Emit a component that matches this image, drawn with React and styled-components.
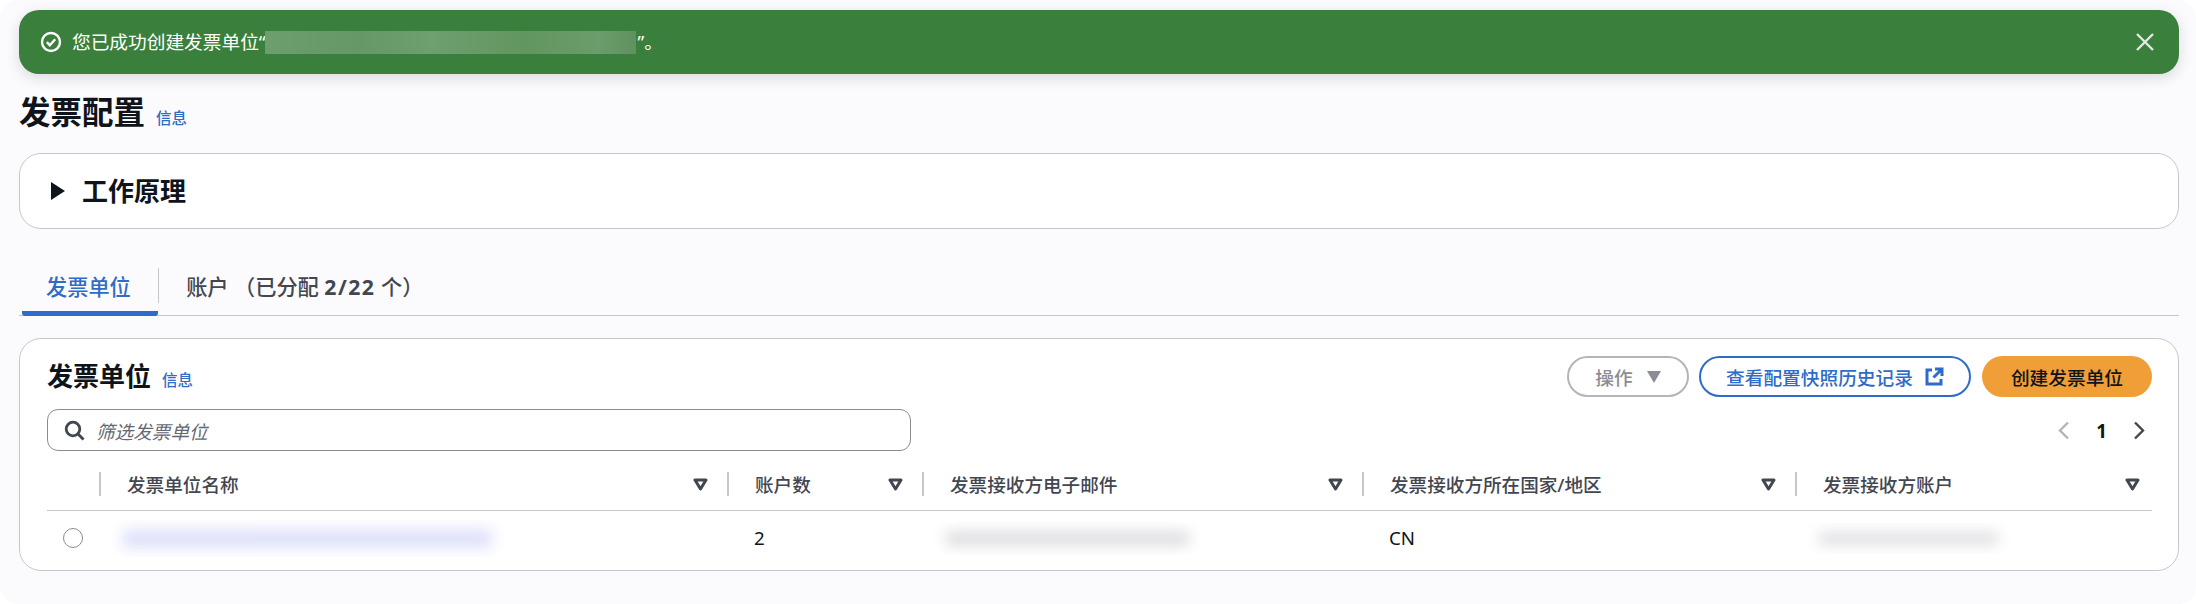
import React from 'react'
import styled, { createGlobalStyle } from 'styled-components'

const GlobalStyle = createGlobalStyle`
    html,body{
        margin:0;
        padding:0;
        background:#fff;
    }
    body{
        font-family:"Noto Sans","Noto Sans CJK SC",sans-serif;
        color:#0f141a;
    }
`

const columns = [
    { title: '发票单位名称' },
    { title: '账户数' },
    { title: '发票接收方电子邮件' },
    { title: '发票接收方所在国家/地区' },
    { title: '发票接收方账户', last: true },
]

function CheckCircleIcon() {
    return (
        <svg width="22" height="22" viewBox="0 0 22 22" fill="none" stroke="#fff" strokeWidth="2.4">
            <circle cx="11" cy="11" r="9" />
            <path d="M6.8 11.2l3 3 5.4-6" />
        </svg>
    )
}

function CloseIcon() {
    return (
        <svg width="20" height="20" viewBox="0 0 20 20" stroke="#e4e9e4" strokeWidth="2.4" fill="none">
            <path d="M2 2l16 16M18 2L2 18" />
        </svg>
    )
}

function SortIcon() {
    return (
        <svg width="15" height="13" viewBox="0 0 15 13" fill="none" stroke="#424650" strokeWidth="3" strokeLinejoin="round">
            <path d="M2 2h11L7.5 11z" />
        </svg>
    )
}

function SearchIcon() {
    return (
        <svg width="21" height="21" viewBox="0 0 21 21" fill="none" stroke="#424650" strokeWidth="2.8">
            <circle cx="9" cy="9" r="6.8" />
            <path d="M14 14l5.5 5.5" />
        </svg>
    )
}

function ExternalIcon() {
    return (
        <svg width="19" height="19" viewBox="0 0 19 19" fill="none" stroke="#2f6bc8" strokeWidth="3">
            <path d="M7 3H2v14h14v-5" />
            <path d="M10 2h7v7M17 2L8.5 10.5" />
        </svg>
    )
}

function Chevron({ left, muted }) {
    return (
        <svg width="13" height="19" viewBox="0 0 13 19" fill="none" stroke={muted ? '#b4b4bb' : '#424650'} strokeWidth="2.4">
            <path d={left ? 'M11 1.5L3 9.5l8 8' : 'M2 1.5l8 8-8 8'} />
        </svg>
    )
}

export default function App() {
    return (
        <Page>
            <GlobalStyle />
            <Flash>
                <CheckCircleIcon />
                <FlashMessage>您已成功创建发票单位“</FlashMessage>
                <FlashRedaction />
                <FlashText>”。</FlashText>
                <FlashClose><CloseIcon /></FlashClose>
            </Flash>

            <PageHeader>
                <PageTitle>发票配置</PageTitle>
                <InfoLink>信息</InfoLink>
            </PageHeader>

            <Expandable>
                <Caret />
                <ExpandableTitle>工作原理</ExpandableTitle>
            </Expandable>

            <Tabs>
                <Tab active>发票单位</Tab>
                <TabDivider />
                <Tab>账户 （已分配 <b>2/22</b> 个）</Tab>
            </Tabs>

            <Card>
                <CardTop>
                    <CardTitleRow>
                        <CardTitle>发票单位</CardTitle>
                        <InfoLink>信息</InfoLink>
                    </CardTitleRow>
                    <Actions>
                        <DisabledButton>操作<ButtonCaret /></DisabledButton>
                        <OutlineButton>查看配置快照历史记录<ExternalIcon /></OutlineButton>
                        <PrimaryButton>创建发票单位</PrimaryButton>
                    </Actions>
                </CardTop>

                <FilterRow>
                    <SearchBox>
                        <SearchIcon />
                        <Placeholder>筛选发票单位</Placeholder>
                    </SearchBox>
                    <Pagination>
                        <Chevron left muted />
                        <PageNumber>1</PageNumber>
                        <Chevron />
                    </Pagination>
                </FilterRow>

                <Table>
                    <HeaderSpacer />
                    {columns.map(col => (
                        <HeaderCell key={col.title} $last={col.last}>
                            <HeaderDivider />
                            <HeaderLabel>{col.title}</HeaderLabel>
                            <SortIcon />
                        </HeaderCell>
                    ))}
                    <RadioCell><Radio /></RadioCell>
                    <Cell>
                        <Redaction $width={397} $height={37} $tint="#d9dcfa" />
                    </Cell>
                    <TextCell>2</TextCell>
                    <Cell>
                        <Redaction $width={271} $height={33} $tint="#d8d8dc" />
                    </Cell>
                    <TextCell>CN</TextCell>
                    <Cell>
                        <Redaction $width={207} $height={31} $tint="#dadade" />
                    </Cell>
                </Table>
            </Card>
        </Page>
    )
}

const Page = styled.div`
    box-sizing:border-box;
    width:2196px;
    height:604px;
    padding:10px 17px 0 19px;
    background:#fbfbfe;
    border-radius:18px;
    overflow:hidden;
`

const Flash = styled.div`
    box-sizing:border-box;
    height:64px;
    display:flex;
    align-items:center;
    padding:0 24px 0 21px;
    background:#3a7f3b;
    border-radius:20px;
    color:#fff;
    box-shadow:0 4px 14px rgba(15,20,26,.14);
    svg{
        flex:none;
    }
`

const FlashText = styled.span`
    font-size:18.7px;
    line-height:24px;
`

const FlashMessage = styled(FlashText)`
    margin-left:10px;
`

const FlashRedaction = styled.div`
    width:371px;
    height:23px;
    margin:0 2px 0 -1px;
    background:linear-gradient(90deg,#6c9e6e 0%,#659866 25%,#6d9f6f 45%,#62965f 70%,#6b9c6c 90%,#5f925f 100%);
`

const FlashClose = styled.div`
    margin-left:auto;
    display:flex;
`

const PageHeader = styled.div`
    display:flex;
    align-items:baseline;
    gap:11px;
    margin-top:16px;
`

const PageTitle = styled.h1`
    margin:0;
    font-size:31.5px;
    line-height:44px;
    font-weight:700;
    color:#0f141a;
`

const InfoLink = styled.a`
    font-size:15.5px;
    font-weight:500;
    color:#2f6bc8;
`

const Expandable = styled.div`
    box-sizing:border-box;
    height:76px;
    margin-top:19px;
    display:flex;
    align-items:center;
    padding-left:31px;
    background:#fff;
    border:1.4px solid #c6c6cd;
    border-radius:22px;
`

const Caret = styled.span`
    width:0;
    height:0;
    border-style:solid;
    border-width:9px 0 9px 14px;
    border-color:transparent transparent transparent #0f141a;
`

const ExpandableTitle = styled.h2`
    margin:0 0 0 17px;
    font-size:26px;
    line-height:36px;
    font-weight:700;
`

const Tabs = styled.div`
    box-sizing:border-box;
    height:87px;
    margin-top:0;
    padding:39px 0 0 3px;
    display:flex;
    align-items:flex-start;
    border-bottom:1.4px solid #c6c6cd;
`

const Tab = styled.div`
    box-sizing:border-box;
    height:48px;
    padding:${props => props.active ? '5px 27px 0 24px' : '5px 0 0 27px'};
    font-size:21.2px;
    line-height:28px;
    font-weight:500;
    color:${props => props.active ? '#2f6bc8' : '#424650'};
    border-bottom:${props => props.active ? '5px solid #2f6bc8' : 'none'};
    border-radius:3px;
    white-space:pre;
    b{
        font-weight:700;
        letter-spacing:1.5px;
    }
`

const TabDivider = styled.div`
    width:1.4px;
    height:35px;
    background:#c6c6cd;
`

const Card = styled.section`
    box-sizing:border-box;
    height:233px;
    margin-top:22px;
    padding:17px 26px 0 27px;
    background:#fff;
    border:1.4px solid #c6c6cd;
    border-radius:22px;
`

const CardTop = styled.div`
    display:flex;
    justify-content:space-between;
    align-items:flex-start;
    height:53px;
`

const CardTitleRow = styled.div`
    display:flex;
    align-items:baseline;
    gap:11px;
    margin-top:2px;
`

const CardTitle = styled.h2`
    margin:0;
    font-size:26px;
    line-height:36px;
    font-weight:700;
`

const Actions = styled.div`
    display:flex;
    gap:10px;
`

const Button = styled.button`
    box-sizing:border-box;
    height:41px;
    display:flex;
    align-items:center;
    justify-content:center;
    padding:0;
    font-family:inherit;
    font-size:18.7px;
    font-weight:500;
    border-radius:21px;
    background:#fff;
`

const DisabledButton = styled(Button)`
    width:122px;
    gap:14px;
    color:#8c8c94;
    border:2.6px solid #b4b4bb;
`

const ButtonCaret = styled.span`
    width:0;
    height:0;
    border-style:solid;
    border-width:12px 7px 0 7px;
    border-color:#8c8c94 transparent transparent transparent;
`

const OutlineButton = styled(Button)`
    width:272px;
    gap:12px;
    color:#2f6bc8;
    border:2.6px solid #2f6bc8;
`

const PrimaryButton = styled(Button)`
    width:170px;
    margin-left:1px;
    color:#0f141a;
    border:none;
    background:#f09e38;
`

const FilterRow = styled.div`
    display:flex;
    justify-content:space-between;
    align-items:center;
    height:42px;
`

const SearchBox = styled.div`
    box-sizing:border-box;
    width:864px;
    height:42px;
    display:flex;
    align-items:center;
    gap:11px;
    padding-left:16px;
    border:1.4px solid #8c8c94;
    border-radius:11px;
`

const Placeholder = styled.span`
    font-size:18.6px;
    font-style:italic;
    color:#656871;
`

const Pagination = styled.div`
    display:flex;
    align-items:center;
    gap:26px;
    padding-right:6px;
`

const PageNumber = styled.span`
    font-size:18.7px;
    font-weight:700;
    color:#0f141a;
`

const Table = styled.div`
    display:grid;
    grid-template-columns:52px 628px 195px 440px 433px 357px;
    grid-template-rows:60px 54px;
    margin-top:0;
`

const HeaderSpacer = styled.div`
    border-bottom:1.4px solid #c6c6cd;
`

const HeaderCell = styled.div`
    display:flex;
    align-items:center;
    padding-right:${props => props.$last ? '4px' : '11px'};
    padding-top:6px;
    border-bottom:1.4px solid #c6c6cd;
    svg{
        flex:none;
        margin-top:2px;
        margin-right:8px;
    }
`

const HeaderDivider = styled.span`
    width:2px;
    height:24px;
    flex:none;
    background:#c6c6cd;
`

const HeaderLabel = styled.span`
    flex:1;
    margin-left:26px;
    font-size:18.6px;
    font-weight:500;
    color:#424650;
`

const RadioCell = styled.div`
    display:flex;
    align-items:center;
    padding-left:16px;
`

const Radio = styled.span`
    box-sizing:border-box;
    width:20px;
    height:20px;
    border:1.6px solid #8c8c94;
    border-radius:50%;
`

const Cell = styled.div`
    display:flex;
    align-items:center;
    padding-left:10px;
`

const TextCell = styled.div`
    display:flex;
    align-items:center;
    padding:0 0 2px 27px;
    font-size:18.7px;
    color:#0f141a;
`

const Redaction = styled.div`
    width:${props => props.$width}px;
    height:${props => props.$height}px;
    overflow:hidden;
    position:relative;
    &:after{
        content:"";
        position:absolute;
        inset:9px 14px;
        background:${props => props.$tint};
        opacity:.85;
        filter:blur(7px);
    }
`
